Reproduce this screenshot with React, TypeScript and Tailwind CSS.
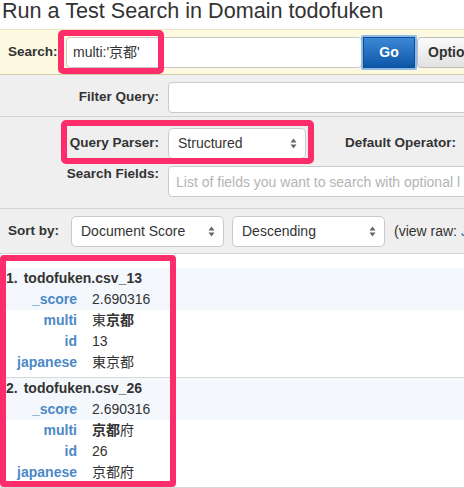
import React from "react";

function Arrows() {
  return (
    <svg width="7" height="11" viewBox="0 0 7 11" className="shrink-0">
      <polygon points="0.5,4.5 3.5,0.5 6.5,4.5" fill="#666" />
      <polygon points="0.5,6.5 3.5,10.5 6.5,6.5" fill="#666" />
    </svg>
  );
}

function Select({ text, className }: { text: string; className: string }) {
  return (
    <div
      className={
        "flex items-center justify-between h-[31px] border border-[#cacaca] rounded-[5px] bg-white pl-[9px] pr-[8px] text-[14px] text-[#333] shrink-0 " +
        className
      }
    >
      <span>{text}</span>
      <Arrows />
    </div>
  );
}

function Row({ label, children }: { label: string; children: React.ReactNode }) {
  return (
    <div className="flex items-center h-[21px]">
      <div className="w-[77px] text-right font-bold text-[14px] text-[#4b88c6] shrink-0">{label}</div>
      <div className="ml-[15px] text-[14px] text-[#333]">{children}</div>
    </div>
  );
}

function Result({
  n,
  id,
  multi,
  jp,
  first,
}: {
  n: number;
  id: string;
  multi: React.ReactNode;
  jp: string;
  first?: boolean;
}) {
  return (
    <div className={(first ? "mt-[14px] " : "") + "pb-[4px] border-b border-[#d9d9d9]"}>
      <div className="bg-[#f4f8fd]">
        <div className="flex items-center h-[21px] pl-[6px] font-bold text-[14px] text-[#333]">
          <span>{n}.</span>
          <span className="ml-[6px]">todofuken.csv_{id}</span>
        </div>
        <Row label="_score">2.690316</Row>
      </div>
      <Row label="multi">{multi}</Row>
      <Row label="id">{id}</Row>
      <Row label="japanese">{jp}</Row>
    </div>
  );
}

export default function App() {
  return (
    <div className="relative w-[464px] h-[488px] overflow-hidden bg-white font-['Liberation_Sans','Noto_Sans_CJK_JP',Arial,sans-serif] text-[#333]">
      {/* Title */}
      <div className="h-[28px] pl-[2px] text-[21.6px] leading-[22px] text-[#333] whitespace-nowrap">
        Run a Test Search in Domain todofuken
      </div>

      {/* Search bar */}
      <div className="h-[46px] mt-[1px] bg-[#fdf9e1] border-t border-[#ebe4bc] border-b border-b-[#d6cfa5] flex items-center">
        <div className="pl-[8px] w-[66px] shrink-0 font-bold text-[13.5px] text-[#333]">Search:</div>
        <div className="w-[296px] h-[31px] shrink-0 bg-white border border-[#c8c8c8] rounded-[4px] flex items-center pl-[6px] text-[14px] text-[#333]">
          multi:'京都'
        </div>
        <div className="shrink-0 -ml-[1px] p-[2px] bg-[#8fbbe6] rounded-[2px]">
          <div className="w-[52px] h-[31px] flex items-center justify-center bg-gradient-to-b from-[#3b88d6] to-[#0b57a7] border border-[#0d4f96] text-white font-bold text-[14px]">
            Go
          </div>
        </div>
        <div className="shrink-0 w-[80px] h-[31px] flex items-center pl-[10px] bg-gradient-to-b from-[#fbfbfb] to-[#e1e1e1] border border-[#bdbdbd] rounded-l-[4px] font-bold text-[14px] text-[#333]">
          Options
        </div>
      </div>

      {/* Gray section */}
      <div className="bg-[#efefef]">
        <div className="pt-[7px] pb-[3px] border-b border-[#d4d4d4] flex items-center">
          <div className="w-[159px] shrink-0 text-right font-bold text-[13.5px]">Filter Query:</div>
          <div className="ml-[9px] w-[320px] shrink-0 h-[31px] bg-white border border-[#cacaca] rounded-[4px]" />
        </div>

        <div className="pt-[11px] pb-[11px] border-b border-[#d4d4d4] flex flex-col gap-[7px]">
          <div className="flex items-center">
            <div className="w-[159px] shrink-0 text-right font-bold text-[13.5px]">Query Parser:</div>
            <Select text="Structured" className="ml-[9px] w-[138px]" />
            <div className="ml-[39px] shrink-0 font-bold text-[13.5px] whitespace-nowrap">Default Operator:</div>
          </div>
          <div className="flex items-start">
            <div className="w-[159px] shrink-0 text-right font-bold text-[13.5px] leading-[16px]">Search Fields:</div>
            <div className="ml-[9px] w-[320px] shrink-0 h-[31px] bg-white border border-[#cacaca] rounded-[4px] flex items-center pl-[7px] pt-[2px] text-[14px] text-[#b4b4b4] whitespace-nowrap overflow-hidden">
              List of fields you want to search with optional l
            </div>
          </div>
        </div>

        <div className="pt-[7px] pb-[6px] border-b border-[#d4d4d4] flex items-center">
          <div className="pl-[8px] w-[71px] shrink-0 font-bold text-[13.5px]">Sort by:</div>
          <Select text="Document Score" className="w-[153px]" />
          <Select text="Descending" className="ml-[8px] w-[153px]" />
          <div className="ml-[9px] shrink-0 whitespace-nowrap text-[14px] text-[#333]">
            (view raw: <span className="text-[#2f6fb5]">JSON</span>
          </div>
        </div>
      </div>

      {/* Results */}
      <div>
        <Result
          first
          n={1}
          id="13"
          multi={
            <span>
              東<b>京都</b>
            </span>
          }
          jp="東京都"
        />
        <Result
          n={2}
          id="26"
          multi={
            <span>
              <b>京都</b>府
            </span>
          }
          jp="京都府"
        />
      </div>

      {/* Annotation overlays */}
      <div className="absolute left-[58px] top-[30px] w-[106px] h-[44px] border-[6px] border-[#fd2d6c] rounded-[5px]" />
      <div className="absolute left-[61px] top-[120px] w-[253px] h-[44px] border-[6px] border-[#fd2d6c] rounded-[5px]" />
      <div className="absolute left-[0px] top-[255px] w-[176px] h-[232px] border-[6px] border-[#fd2d6c] rounded-[4px]" />
    </div>
  );
}
